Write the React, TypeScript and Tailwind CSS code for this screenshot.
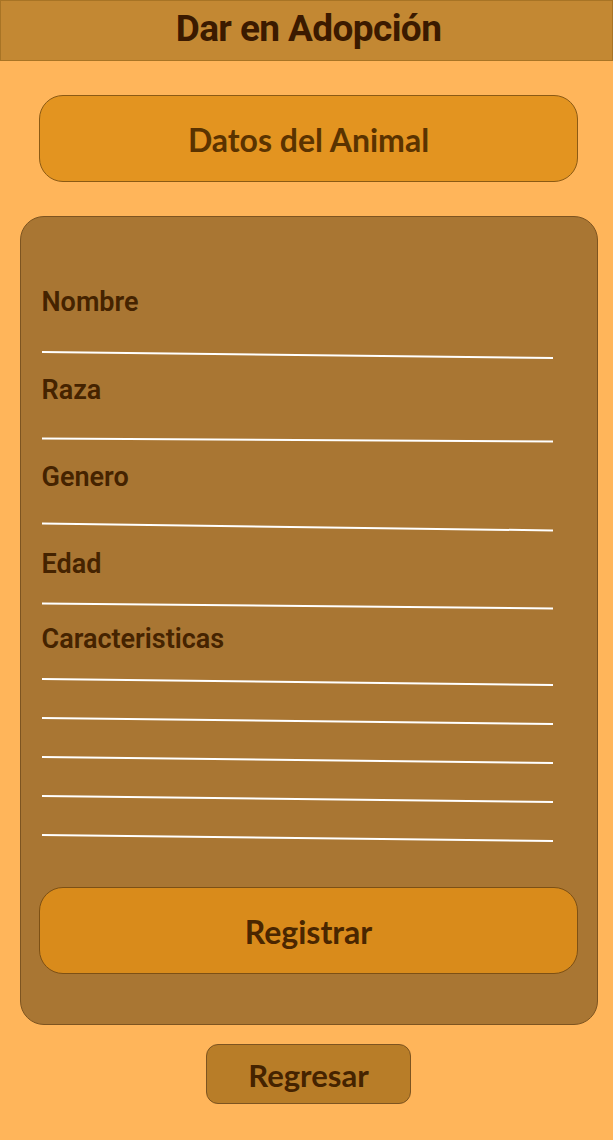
export default function App() {
  const fields = [
    { label: 'Nombre', labelMt: 'mt-0', lineMt: 'mt-[37px]', rot: 'rotate-[0.67deg]' },
    { label: 'Raza', labelMt: 'mt-[19px]', lineMt: 'mt-[34px]', rot: 'rotate-[0.34deg]' },
    { label: 'Genero', labelMt: 'mt-[21px]', lineMt: 'mt-[34px]', rot: 'rotate-[0.78deg]' },
    { label: 'Edad', labelMt: 'mt-[21px]', lineMt: 'mt-[26px]', rot: 'rotate-[0.56deg]' },
  ];

  return (
    <div className="min-h-[1140px] w-full bg-[#FFB55A] flex flex-col items-center" style={{ fontFamily: 'Roboto, sans-serif' }}>
      <header className="w-full h-[61px] bg-[#C38833] border border-[#A87425] flex items-center justify-center">
        <h1 className="ml-[4px] text-[37px] font-bold text-[#3B1A00] tracking-[-0.6px] leading-none -mt-[4px]">Dar en Adopción</h1>
      </header>

      <div className="pl-[4px] flex flex-col items-center">
        <div className="mt-[34px] w-[539px] h-[87px] rounded-[24px] bg-[#E39420] border border-[#8B5A14] flex items-center justify-center">
          <span className="mt-[3px] text-[32px] font-bold text-[#5A3300]" style={{ fontFamily: 'Lato, sans-serif' }}>Datos del Animal</span>
        </div>

        <div className="mt-[34px] w-[578px] rounded-[24px] bg-[#A97633] border border-[#7D5420] pt-[70px] pb-[50px] px-[20px] flex flex-col">
          {fields.map((f) => (
            <div key={f.label} className={`flex flex-col ${f.labelMt}`}>
              <label className="px-[1px] h-[30px] flex items-center text-[27px] font-semibold text-[#452300]">{f.label}</label>
              <div className={`${f.lineMt} ml-[1px] w-[511px] h-[2px] bg-white ${f.rot}`} />
            </div>
          ))}

          <label className="mt-[17px] px-[1px] h-[30px] flex items-center text-[27px] font-semibold text-[#452300]">Caracteristicas</label>
          <div className="mt-[27px] flex flex-col gap-[37px]">
            {[0, 1, 2, 3, 4].map((i) => (
              <div key={i} className="ml-[1px] w-[511px] h-[2px] bg-white rotate-[0.67deg]" />
            ))}
          </div>

          <button className="mt-[48px] self-center w-[539px] h-[87px] rounded-[24px] bg-[#D98B1B] border border-[#7D5014] flex items-center justify-center">
            <span className="mt-[2px] text-[32px] font-bold text-[#4A2600]" style={{ fontFamily: 'Lato, sans-serif' }}>Registrar</span>
          </button>
        </div>

        <button className="mt-[19px] w-[205px] h-[60px] rounded-[12px] bg-[#B87D28] border border-[#7D5420] flex items-center justify-center">
          <span className="mt-[2px] text-[31px] font-bold text-[#452300]" style={{ fontFamily: 'Lato, sans-serif' }}>Regresar</span>
        </button>
      </div>
    </div>
  );
}
